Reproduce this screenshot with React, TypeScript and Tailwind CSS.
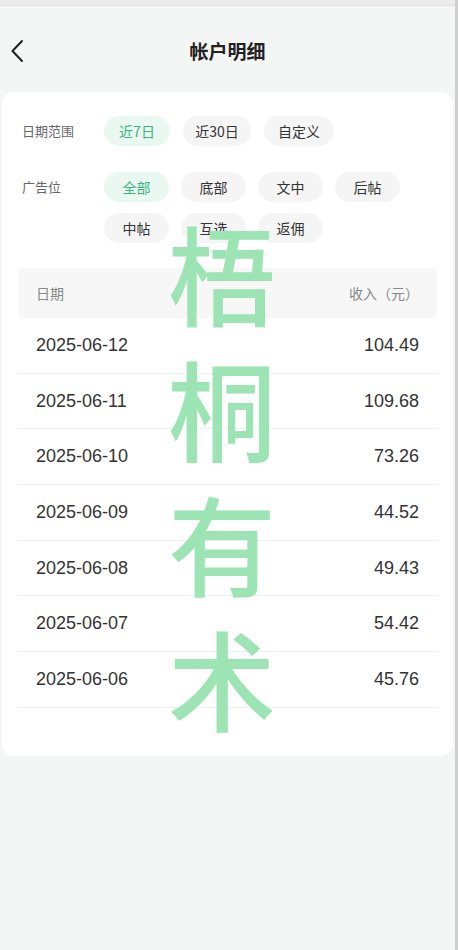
import React from 'react';

const rows = [
  { date: '2025-06-12', amount: '104.49' },
  { date: '2025-06-11', amount: '109.68' },
  { date: '2025-06-10', amount: '73.26' },
  { date: '2025-06-09', amount: '44.52' },
  { date: '2025-06-08', amount: '49.43' },
  { date: '2025-06-07', amount: '54.42' },
  { date: '2025-06-06', amount: '45.76' },
];

const Chip: React.FC<{ label: string; active?: boolean; width?: string }> = ({ label, active, width = 'w-[65px]' }) => (
  <div
    className={
      (active
        ? 'bg-[#e9f8f0] text-[#3bb483]'
        : 'bg-[#f5f5f5] text-[#333]') +
      ' h-[30px] rounded-full text-[14px] flex items-center justify-center ' +
      width
    }
  >
    {label}
  </div>
);

export default function App() {
  return (
    <div
      className="relative w-[458px] h-[950px] bg-[#f4f5f5] flex overflow-hidden"
      style={{ fontFamily: '"Noto Sans CJK SC", "Noto Sans", sans-serif' }}
    >
      <div className="flex-1 flex flex-col">
        {/* status bar remnant */}
        <div className="h-[6px] bg-[#ececec] border-b border-[#e2e2e2]" />

        {/* Header */}
        <div className="h-[86px] flex items-center relative">
          <svg width="14" height="24" viewBox="0 0 14 24" className="ml-[10px] mt-[4px] text-[#222]">
            <path d="M12 2 L2.5 12 L12 22" fill="none" stroke="currentColor" strokeWidth="2" strokeLinecap="round" strokeLinejoin="round" />
          </svg>
          <h1 className="absolute left-0 right-0 mt-[4px] text-center text-[19px] font-bold text-[#222]">帐户明细</h1>
        </div>

        {/* Card */}
        <div className="mx-[2px] bg-white rounded-[12px] pt-[24px] pb-[48px]">
          <div className="flex items-center pl-[20px]">
            <span className="w-[82px] text-[13px] text-[#666]">日期范围</span>
            <div className="flex gap-[13px]">
              <Chip label="近7日" active width="w-[66px]" />
              <Chip label="近30日" width="w-[68px]" />
              <Chip label="自定义" width="w-[70px]" />
            </div>
          </div>

          <div className="flex items-start pl-[20px] mt-[26px]">
            <span className="w-[82px] h-[30px] flex items-center text-[13px] text-[#666]">广告位</span>
            <div className="flex flex-wrap w-[312px] gap-x-[12px] gap-y-[11px]">
              <Chip label="全部" active />
              <Chip label="底部" />
              <Chip label="文中" />
              <Chip label="后帖" />
              <Chip label="中帖" />
              <Chip label="互选" />
              <Chip label="返佣" />
            </div>
          </div>

          {/* Table */}
          <div className="mx-[16px] mt-[25px]">
            <div className="h-[50px] bg-[#f7f7f7] rounded-[4px] flex items-center justify-between px-[18px] text-[14px] text-[#888]">
              <span>日期</span>
              <span>收入（元）</span>
            </div>
            {rows.map((r) => (
              <div
                key={r.date}
                className="h-[55.7px] flex items-center justify-between px-[18px] border-b border-[#efefef] text-[18px] text-[#333]"
                style={{ fontFamily: '"Liberation Sans", Arial, sans-serif' }}
              >
                <span>{r.date}</span>
                <span>{r.amount}</span>
              </div>
            ))}
          </div>
        </div>
      </div>
      <div className="w-[3px] bg-[#cfcfcf]" />

      {/* Watermark */}
      <div className="absolute left-[168px] top-[204px] flex flex-col items-center pointer-events-none text-[108px] leading-[135px] font-medium text-[#9ce4b4]">
        <span>梧</span>
        <span>桐</span>
        <span>有</span>
        <span>术</span>
      </div>
    </div>
  );
}
